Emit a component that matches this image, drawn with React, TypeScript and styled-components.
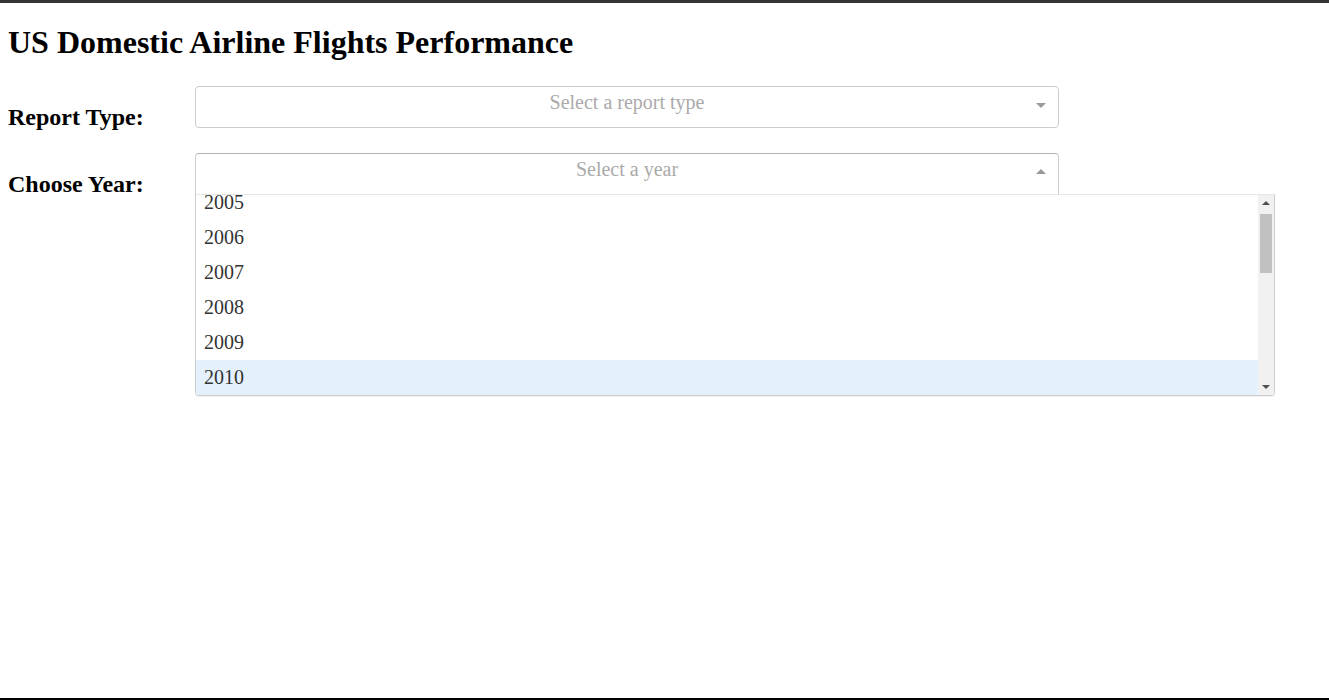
import React from "react";
import styled, { createGlobalStyle } from "styled-components";

const GlobalStyle = createGlobalStyle`
  html, body {
    margin: 0;
    padding: 0;
    background: #ffffff;
  }
  body {
    font-family: "Liberation Serif", "Times New Roman", serif;
    color: #000;
  }
`;

const YEARS = Array.from({ length: 16 }, (_, i) => 2005 + i);
// the list is scrolled 10px down: only the first six rows are in view
const VISIBLE = YEARS.slice(0, 6);

export default function App() {
  return (
    <Frame>
      <GlobalStyle />
      <Title>US Domestic Airline Flights Performance</Title>
      <FieldRow>
        <FieldLabel>Report Type:</FieldLabel>
        <Select>
          <Control>
            <Placeholder>Select a report type</Placeholder>
            <ArrowZone>
              <Arrow />
            </ArrowZone>
          </Control>
        </Select>
      </FieldRow>
      <FieldRow>
        <FieldLabel>Choose Year:</FieldLabel>
        <Select>
          <Control open>
            <Placeholder>Select a year</Placeholder>
            <ArrowZone>
              <Arrow up />
            </ArrowZone>
          </Control>
          <MenuOuter>
            <MenuWindow>
              <MenuList>
                {VISIBLE.map((y) => (
                  <Option key={y} focused={y === 2010}>
                    {y}
                  </Option>
                ))}
              </MenuList>
            </MenuWindow>
            <ScrollBar>
              <ScrollButton>
                <ScrollArrow up />
              </ScrollButton>
              <Track>
                <Thumb />
              </Track>
              <ScrollButton>
                <ScrollArrow />
              </ScrollButton>
            </ScrollBar>
          </MenuOuter>
        </Select>
      </FieldRow>
    </Frame>
  );
}

const Frame = styled.div`
  box-sizing: border-box;
  height: 100vh;
  border-top: 3px solid #343434;
  border-bottom: 2px solid #000;
  padding: 0 8px;
  overflow: hidden;
`;

const Title = styled.h1`
  font-size: 32px;
  font-weight: bold;
  margin: 21.44px 0 24.44px 0;
`;

const FieldRow = styled.div`
  display: flex;
  align-items: flex-start;
  margin-bottom: 25px;

  & + & {
    margin-top: -3px;
  }
`;

const FieldLabel = styled.div`
  width: 187px;
  flex: none;
  font-size: 24px;
  font-weight: bold;
  margin-top: 18px;
`;

const Select = styled.div`
  position: relative;
  width: 864px;
`;

const Control = styled.div<{ open?: boolean }>`
  box-sizing: border-box;
  display: flex;
  align-items: flex-start;
  height: 42px;
  border: 1px solid #ccc;
  border-color: ${(p) => (p.open ? "#b3b3b3 #ccc #d9d9d9" : "#ccc")};
  border-radius: ${(p) => (p.open ? "4px 4px 0 0" : "4px")};
  background: #fff;
`;

const Placeholder = styled.div`
  flex: 1;
  text-align: center;
  color: #aaa;
  font-size: 20px;
  line-height: 23px;
  padding: 4px 0 0 30px;
`;

const ArrowZone = styled.div`
  width: 25px;
  padding-right: 5px;
  height: 40px;
  display: flex;
  align-items: center;
  justify-content: center;
`;

const Arrow = styled.span<{ up?: boolean }>`
  display: block;
  width: 0;
  height: 0;
  border-style: solid;
  border-color: ${(p) =>
    p.up ? "transparent transparent #999" : "#999 transparent transparent"};
  border-width: ${(p) => (p.up ? "0 5px 5px" : "5px 5px 0")};
  margin-top: ${(p) => (p.up ? "-4px" : "-3px")};
`;

const MenuOuter = styled.div`
  position: absolute;
  top: 100%;
  left: 0;
  margin-top: -1px;
  width: 1080px;
  box-sizing: border-box;
  display: flex;
  border: 1px solid #ccc;
  border-top-color: #e6e6e6;
  border-radius: 0 0 4px 4px;
  background: #fff;
  box-shadow: 0 1px 0 rgba(0, 0, 0, 0.06);
  z-index: 1;
`;

const MenuWindow = styled.div`
  flex: 1;
  height: 200px;
  overflow: hidden;
`;

const MenuList = styled.div`
  margin-top: -10px;
`;

const Option = styled.div<{ focused?: boolean }>`
  box-sizing: border-box;
  height: 35px;
  padding: 6px 8px;
  font-size: 20px;
  line-height: 23px;
  color: #333;
  background: ${(p) => (p.focused ? "#e4f0fc" : "#fff")};
`;

const ScrollBar = styled.div`
  width: 16px;
  height: 200px;
  display: flex;
  flex-direction: column;
  background: #f1f1f1;
`;

const ScrollButton = styled.div`
  height: 16px;
  display: flex;
  align-items: center;
  justify-content: center;
`;

const ScrollArrow = styled.span<{ up?: boolean }>`
  display: block;
  width: 0;
  height: 0;
  border-style: solid;
  border-color: ${(p) =>
    p.up ? "transparent transparent #505050" : "#505050 transparent transparent"};
  border-width: ${(p) => (p.up ? "0 4px 4px" : "4px 4px 0")};
`;

const Track = styled.div`
  flex: 1;
  padding: 3px 2px 0;
`;

const Thumb = styled.div`
  height: 59px;
  background: #c1c1c1;
`;
